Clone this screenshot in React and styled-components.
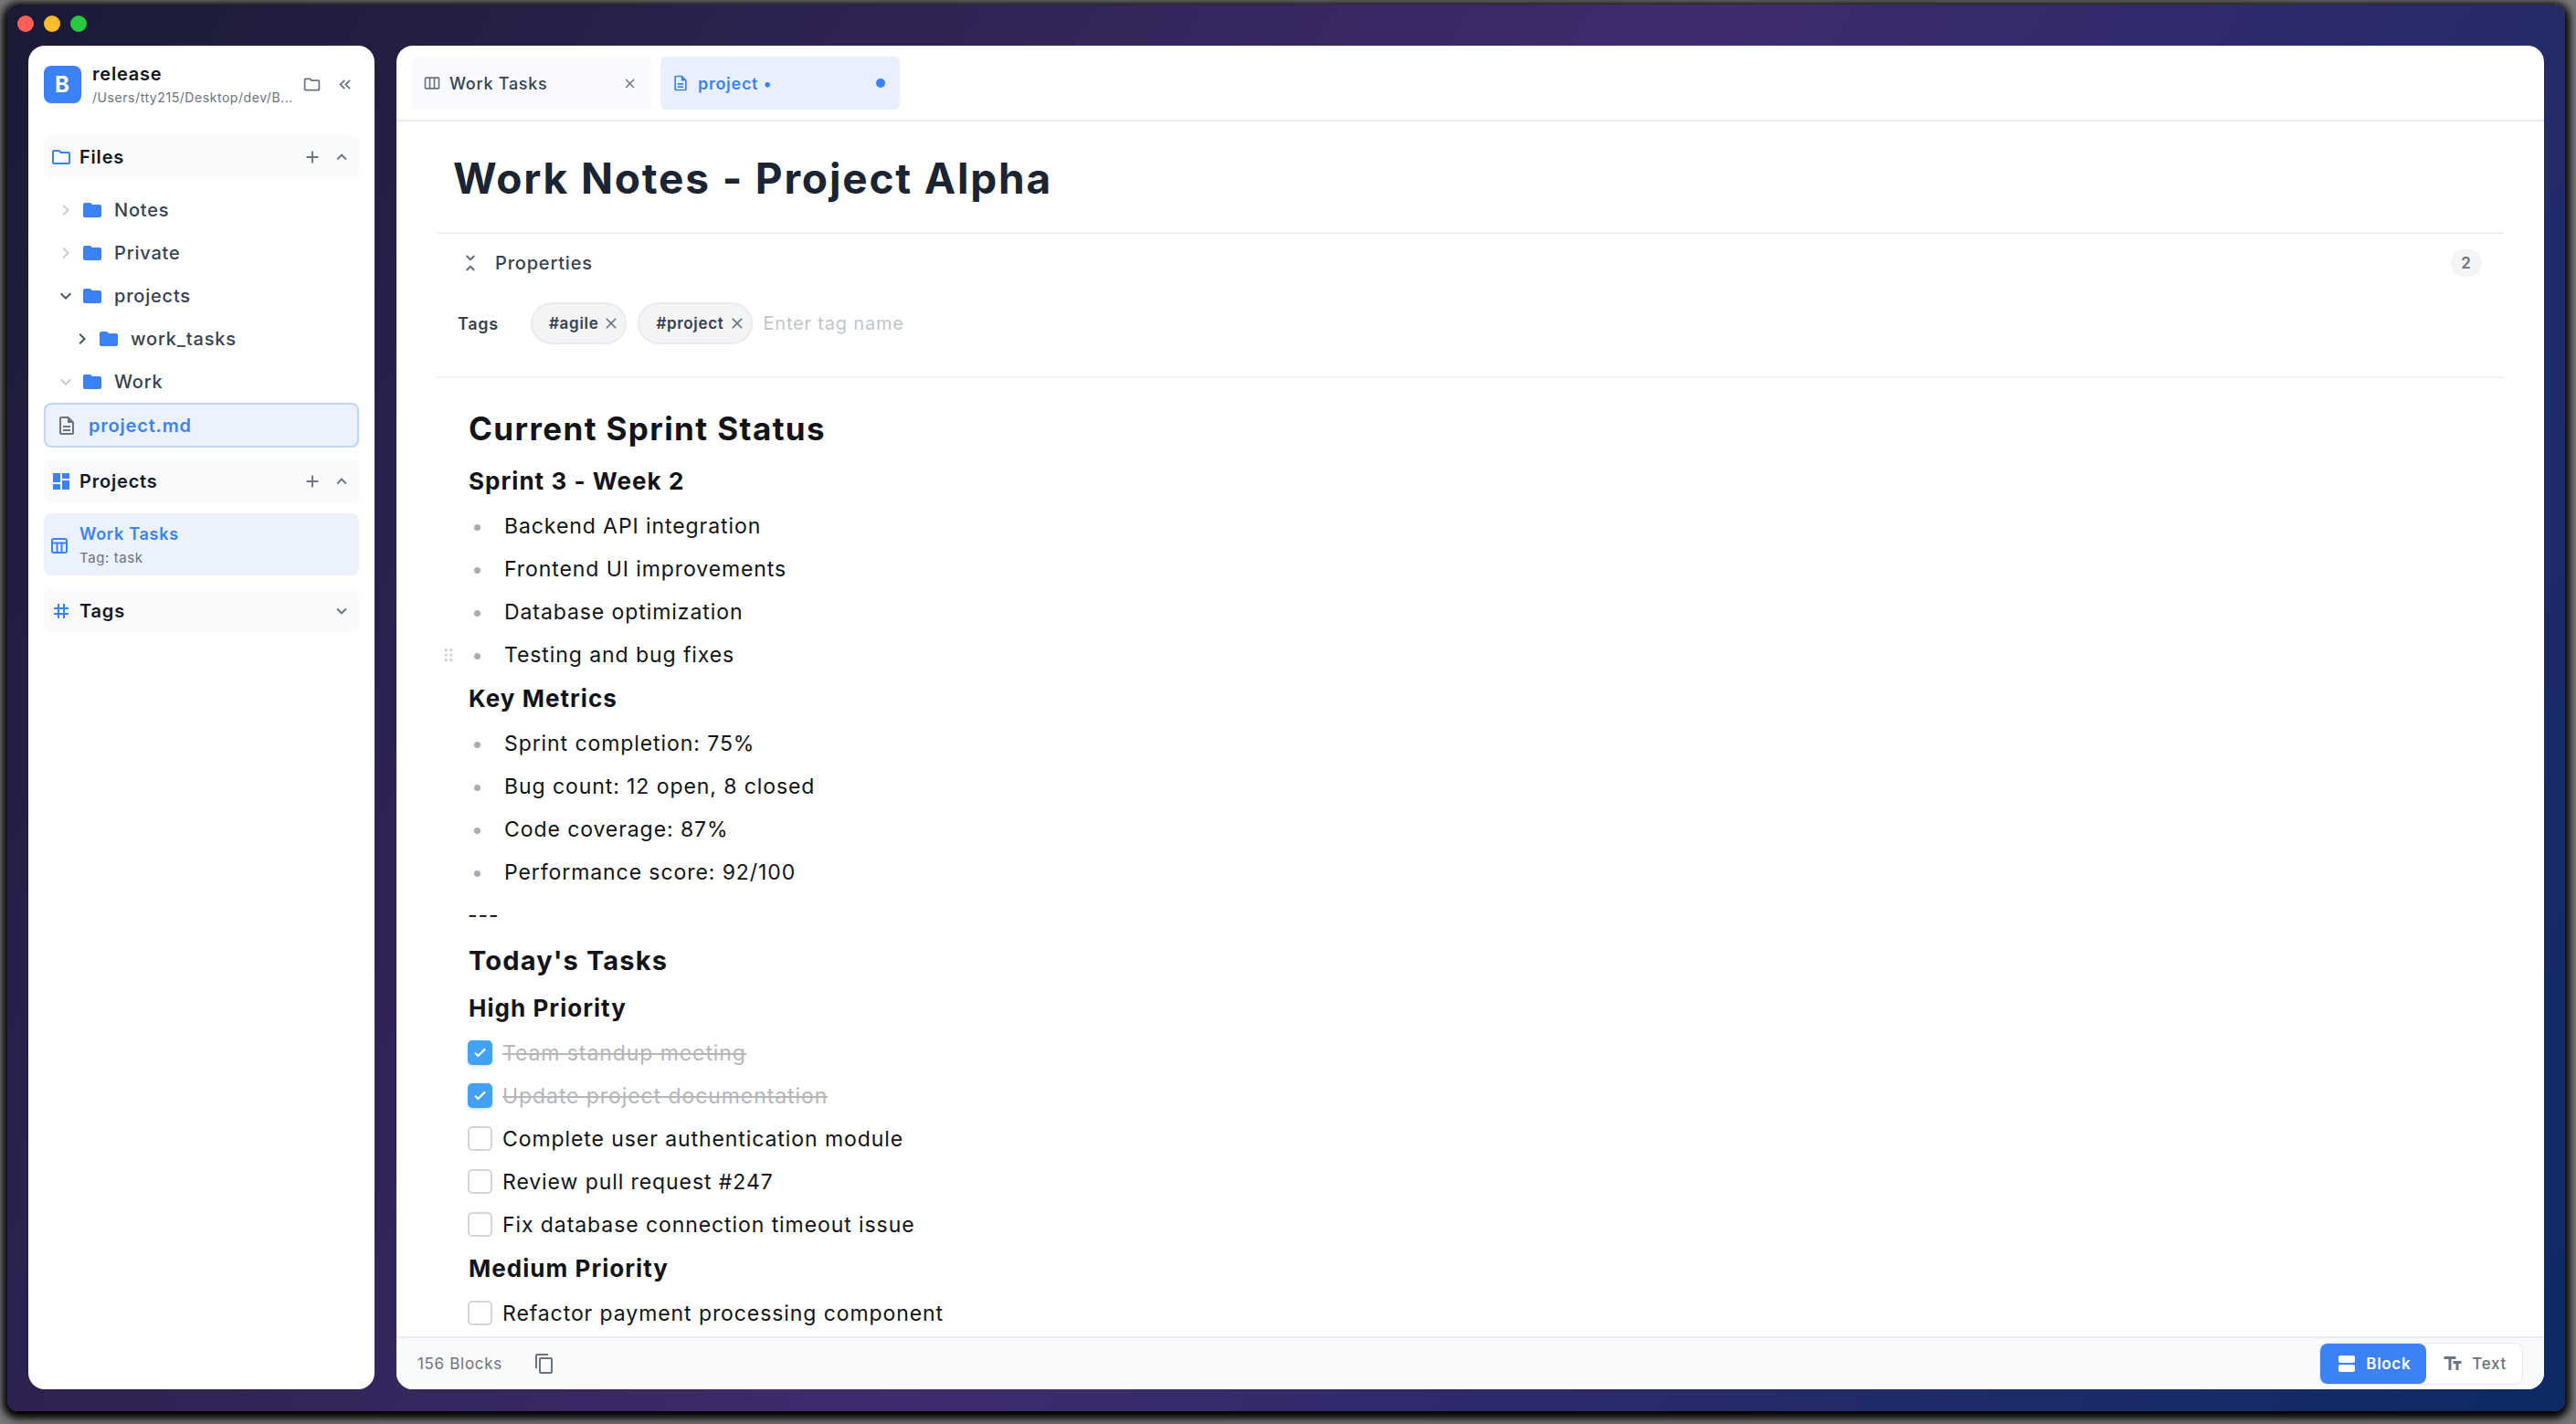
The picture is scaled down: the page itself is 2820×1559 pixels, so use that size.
import React, { useState } from "react";
import styled, { createGlobalStyle, css } from "styled-components";
import {
  MdOutlineFolder,
  MdFolder,
  MdKeyboardDoubleArrowLeft,
  MdAdd,
  MdExpandLess,
  MdExpandMore,
  MdChevronRight,
  MdDashboard,
  MdTag,
  MdClose,
  MdUnfoldLess,
  MdContentCopy,
  MdViewAgenda,
  MdTextFields,
  MdOutlineDescription,
  MdOutlineViewWeek,
  MdDragIndicator,
} from "react-icons/md";

const blue = "#3b82f6";
const gray = "#6b7280";

const GlobalStyle = createGlobalStyle`
  * { box-sizing: border-box; letter-spacing: 0.04em; }
  html, body, #root { height: 100%; }
  body {
    margin: 0;
    background: #777;
    font-family: Inter, "Liberation Sans", sans-serif;
    color: #111317;
  }
  button, input { font: inherit; }
  button { border: 0; padding: 0; background: none; cursor: pointer; }
  svg { display: block; flex: none; }
  h1, h2, h3, h4, p, ul { margin: 0; padding: 0; list-style: none; }
`;

const Desktop = styled.div`
  height: 100vh;
  padding: 5px 12px 14px 8px;
  overflow: hidden;
`;

const Window = styled.div`
  display: flex;
  flex-direction: column;
  height: 100%;
  border-radius: 12px;
  background: linear-gradient(120deg, #1a1a35 0%, #402b6d 50%, #0c2a66 100%);
  box-shadow: 0 3px 8px 5px #000;
`;

const TitleBar = styled.header`
  display: flex;
  align-items: center;
  gap: 11px;
  height: 45px;
  padding: 0 11px 3px;
`;

const Light = styled.button`
  width: 18px;
  height: 18px;
  border-radius: 50%;
  background: ${(p) => p.$color};
`;

const Panes = styled.div`
  display: flex;
  flex: 1;
  gap: 24px;
  min-height: 0;
  padding: 0 23px 24px;
`;

const Sidebar = styled.aside`
  width: 379px;
  flex: none;
  padding: 20px 17px 0;
  border-radius: 18px;
  background: #fff;
`;

const Brand = styled.div`
  display: flex;
  align-items: center;
  height: 44px;
  margin-bottom: 34px;
`;

const Logo = styled.span`
  display: grid;
  place-items: center;
  width: 41px;
  height: 41px;
  margin-right: 12px;
  border-radius: 8px;
  background: ${blue};
  color: #fff;
  font-size: 24px;
  font-weight: 700;
`;

const BrandText = styled.div`
  flex: 1;
  min-width: 0;
  padding-top: 3px;
`;

const BrandName = styled.div`
  font-size: 20px;
  line-height: 27px;
  font-weight: 600;
`;

const BrandPath = styled.div`
  color: ${gray};
  font-size: 14px;
  line-height: 24px;
  white-space: nowrap;
`;

const IconButton = styled.button`
  display: grid;
  place-items: center;
  width: ${(p) => p.$size || 24}px;
  height: ${(p) => p.$size || 24}px;
  color: ${gray};
`;

const BrandActions = styled.div`
  display: flex;
  gap: 12px;
  padding-right: 4px;
`;

const SectionHead = styled.div`
  display: flex;
  align-items: center;
  gap: 8px;
  height: 47px;
  padding: 0 7px;
  border-radius: 8px;
  background: #f9fafc;
  color: ${blue};
`;

const SectionTitle = styled.h2`
  flex: 1;
  color: #111827;
  font-size: 20px;
  font-weight: 600;
`;

const Tree = styled.ul`
  padding: 11px 0 13px;
`;

const TreeRow = styled.button`
  display: flex;
  align-items: center;
  width: 100%;
  height: 47px;
  padding-left: ${(p) => 12 + p.$depth * 18}px;
  color: #374151;
  font-size: 20px;
  font-weight: 500;
`;

const Twist = styled.span`
  width: 24px;
  margin-right: 5px;
  color: ${(p) => (p.$faint ? "#c9cdd3" : "#4b5563")};
`;

const FolderMark = styled.span`
  margin-right: 12px;
  color: ${blue};
`;

const FileRow = styled.button`
  display: flex;
  align-items: center;
  gap: 12px;
  width: 100%;
  height: 49px;
  padding: 0 11px;
  border: 2px solid #bfd5fb;
  border-radius: 8px;
  background: #ebf2fd;
  color: ${blue};
  font-size: 20px;
  font-weight: 600;

  svg { color: ${gray}; }
`;

const ProjectCard = styled.button`
  display: flex;
  align-items: center;
  gap: 11px;
  width: 100%;
  height: 68px;
  margin: 12px 0 15px;
  padding: 2px 6px 0;
  border-radius: 8px;
  background: #ebf1fd;
  color: ${blue};
  font-size: 18px;
  line-height: 28px;
  font-weight: 600;
  text-align: left;

  small {
    display: block;
    color: ${gray};
    font-size: 15px;
    line-height: 24px;
    font-weight: 400;
  }
`;

const Main = styled.main`
  display: flex;
  flex: 1;
  flex-direction: column;
  min-width: 0;
  border-radius: 18px;
  background: #fff;
  overflow: hidden;
`;

const TabBar = styled.nav`
  display: flex;
  flex: none;
  gap: 10px;
  padding: 12px 17px 11px;
  border-bottom: 2px solid #e8eaed;
`;

const Tab = styled.div`
  display: flex;
  align-items: center;
  justify-content: space-between;
  width: 262px;
  height: 58px;
  padding: 0 12px;
  border-radius: 6px;
  background: ${(p) => (p.$active ? "#e9f0fd" : "#f8fafe")};
`;

const TabLabel = styled.button`
  display: flex;
  align-items: center;
  gap: 9px;
  color: ${(p) => (p.$active ? blue : "#374151")};
  font-size: 18px;
  font-weight: ${(p) => (p.$active ? 600 : 500)};

  svg { color: ${(p) => (p.$active ? blue : gray)}; }
`;

const Unsaved = styled.span`
  width: 10px;
  height: 10px;
  margin-right: 4px;
  border-radius: 50%;
  background: ${blue};
`;

const Document = styled.div`
  flex: 1;
  min-height: 0;
  padding: 0 44px;
  overflow: hidden;
`;

const DocTitle = styled.h1`
  padding: 33px 18px 30px;
  color: #1a2433;
  font-size: 46px;
  line-height: 58px;
  font-weight: 700;
`;

const Properties = styled.section`
  height: 160px;
  border: solid #f1f2f4;
  border-width: 2px 0;
`;

const PropsHead = styled.div`
  display: flex;
  align-items: center;
  gap: 14px;
  height: 64px;
  padding: 0 24px;
  color: #374151;
  font-size: 20px;
  font-weight: 500;

  svg { color: ${gray}; }
`;

const Count = styled.span`
  display: grid;
  place-items: center;
  width: 34px;
  height: 30px;
  margin-left: auto;
  border-radius: 15px;
  background: #f3f4f6;
  color: ${gray};
  font-size: 17px;
  font-weight: 600;
`;

const TagRow = styled.div`
  display: flex;
  align-items: center;
  gap: 12px;
  padding: 11px 23px;
`;

const TagLabel = styled.label`
  width: 68px;
  color: #374151;
  font-size: 18px;
  font-weight: 600;
`;

const Chip = styled.span`
  display: flex;
  align-items: center;
  gap: 4px;
  height: 46px;
  padding: 0 5px 0 18px;
  border: 2px solid #e9ebee;
  border-radius: 23px;
  background: #f3f4f6;
  color: #374151;
  font-size: 17px;
  font-weight: 600;
`;

const TagInput = styled.input`
  width: 300px;
  padding: 0;
  border: 0;
  outline: 0;
  background: none;
  font-size: 20px;

  &::placeholder { color: #c0c4cd; opacity: 1; }
`;

const Blocks = styled.div`
  padding: 22px 8px 0;
`;

const headingSizes = {
  1: css`font-size: 35px; line-height: 66px;`,
  2: css`font-size: 29px; line-height: 54px;`,
  3: css`font-size: 26px; line-height: 50px;`,
};

const Heading = styled.h2`
  padding-left: 27px;
  font-weight: 700;
  ${(p) => headingSizes[p.$level]}
`;

const Line = styled.div`
  display: flex;
  align-items: center;
  height: 47px;
  font-size: 23px;
  font-weight: 400;
`;

const Handle = styled.span`
  display: flex;
  justify-content: flex-end;
  width: 16px;
  margin-right: 10px;
  color: #d3d6da;
`;

const Bullet = styled.span`
  width: 7px;
  height: 7px;
  margin: 4px 26px 0 7px;
  border-radius: 50%;
  background: #a9acb2;
`;

const Check = styled.input`
  appearance: none;
  flex: none;
  width: 27px;
  height: 27px;
  margin: 0 11px 0 0;
  border: 2px solid #d3d5d9;
  border-radius: 5px;
  background: #fff;

  &:checked {
    border-color: #42a0f5;
    background: #42a0f5 url("data:image/svg+xml,%3Csvg xmlns='http://www.w3.org/2000/svg' viewBox='0 0 24 24' fill='none' stroke='white' stroke-width='3' stroke-linecap='round' stroke-linejoin='round'%3E%3Cpath d='M5 13l4 4L19 7'/%3E%3C/svg%3E") center / 17px no-repeat;
    box-shadow: 0 2px 5px #42a0f540;
  }
`;

const TaskLabel = styled.label`
  color: ${(p) => (p.$done ? "#b4b6ba" : "inherit")};
  text-decoration: ${(p) => (p.$done ? "line-through" : "none")};
`;

const StatusBar = styled.footer`
  display: flex;
  flex: none;
  align-items: center;
  height: 58px;
  padding: 0 23px;
  border-top: 2px solid #e8eaed;
  background: #f9fafc;
  color: ${gray};
  font-size: 17px;
`;

const CopyButton = styled(IconButton)`
  margin-left: 34px;
`;

const Modes = styled.div`
  display: flex;
  height: 46px;
  margin-left: auto;
  border: 1px solid #e5e7eb;
  border-radius: 9px;
  background: #fff;
`;

const Mode = styled.button`
  display: flex;
  align-items: center;
  gap: 9px;
  padding: 0 17px;
  border-radius: 8px;
  background: ${(p) => (p.$active ? blue : "transparent")};
  color: ${(p) => (p.$active ? "#fff" : gray)};
  font-size: 17px;
  font-weight: ${(p) => (p.$active ? 600 : 500)};
`;

const tree = [
  { name: "Notes", faint: true },
  { name: "Private", faint: true },
  { name: "projects", open: true },
  { name: "work_tasks", depth: 1 },
  { name: "Work", open: true, faint: true },
];

const blocks = [
  { type: "h", level: 1, text: "Current Sprint Status" },
  { type: "h", level: 3, text: "Sprint 3 - Week 2" },
  { type: "li", text: "Backend API integration" },
  { type: "li", text: "Frontend UI improvements" },
  { type: "li", text: "Database optimization" },
  { type: "li", text: "Testing and bug fixes", hovered: true },
  { type: "h", level: 3, text: "Key Metrics" },
  { type: "li", text: "Sprint completion: 75%" },
  { type: "li", text: "Bug count: 12 open, 8 closed" },
  { type: "li", text: "Code coverage: 87%" },
  { type: "li", text: "Performance score: 92/100" },
  { type: "p", text: "---" },
  { type: "h", level: 2, text: "Today's Tasks" },
  { type: "h", level: 3, text: "High Priority" },
  { type: "task", text: "Team standup meeting", done: true },
  { type: "task", text: "Update project documentation", done: true },
  { type: "task", text: "Complete user authentication module" },
  { type: "task", text: "Review pull request #247" },
  { type: "task", text: "Fix database connection timeout issue" },
  { type: "h", level: 3, text: "Medium Priority" },
  { type: "task", text: "Refactor payment processing component" },
];

function Task({ id, text, initial }) {
  const [done, setDone] = useState(!!initial);
  return (
    <Line>
      <Handle />
      <Check id={id} type="checkbox" checked={done} onChange={() => setDone(!done)} />
      <TaskLabel htmlFor={id} $done={done}>{text}</TaskLabel>
    </Line>
  );
}

function Block({ block, index }) {
  if (block.type === "h") {
    return <Heading as={`h${block.level + 1}`} $level={block.level}>{block.text}</Heading>;
  }
  if (block.type === "task") {
    return <Task id={`task-${index}`} text={block.text} initial={block.done} />;
  }
  return (
    <Line>
      <Handle>{block.hovered && <MdDragIndicator size={22} />}</Handle>
      {block.type === "li" && <Bullet />}
      {block.text}
    </Line>
  );
}

function Section({ icon, title, addable, open }) {
  return (
    <SectionHead>
      {icon}
      <SectionTitle>{title}</SectionTitle>
      {addable && <IconButton aria-label={`Add to ${title}`}><MdAdd size={22} /></IconButton>}
      <IconButton aria-label={`Toggle ${title}`}>
        {open ? <MdExpandLess size={22} /> : <MdExpandMore size={22} />}
      </IconButton>
    </SectionHead>
  );
}

export default function App() {
  const [mode, setMode] = useState("Block");
  return (
    <Desktop>
      <GlobalStyle />
      <Window>
        <TitleBar>
          <Light $color="#ff5f57" aria-label="Close window" />
          <Light $color="#febc2e" aria-label="Minimize window" />
          <Light $color="#28c840" aria-label="Zoom window" />
        </TitleBar>
        <Panes>
          <Sidebar>
            <Brand>
              <Logo>B</Logo>
              <BrandText>
                <BrandName>release</BrandName>
                <BrandPath>/Users/tty215/Desktop/dev/B...</BrandPath>
              </BrandText>
              <BrandActions>
                <IconButton aria-label="Open folder"><MdOutlineFolder size={21} /></IconButton>
                <IconButton aria-label="Collapse sidebar"><MdKeyboardDoubleArrowLeft size={21} /></IconButton>
              </BrandActions>
            </Brand>
            <Section icon={<MdOutlineFolder size={24} />} title="Files" addable open />
            <Tree>
              {tree.map((row) => (
                <li key={row.name}>
                  <TreeRow $depth={row.depth || 0}>
                    <Twist $faint={row.faint}>
                      {row.open ? <MdExpandMore size={24} /> : <MdChevronRight size={24} />}
                    </Twist>
                    <FolderMark><MdFolder size={24} /></FolderMark>
                    {row.name}
                  </TreeRow>
                </li>
              ))}
              <li>
                <FileRow><MdOutlineDescription size={24} />project.md</FileRow>
              </li>
            </Tree>
            <Section icon={<MdDashboard size={24} />} title="Projects" addable open />
            <ProjectCard>
              <svg width="22" height="22" viewBox="0 0 22 22" fill="none" stroke="currentColor" strokeWidth="2">
                <rect x="3" y="4" width="16" height="15" rx="2" />
                <path d="M3 8.500h16M8.500 9v10M13.500 9v10" />
              </svg>
              <span>Work Tasks<small>Tag: task</small></span>
            </ProjectCard>
            <Section icon={<MdTag size={24} />} title="Tags" />
          </Sidebar>
          <Main>
            <TabBar>
              <Tab>
                <TabLabel><MdOutlineViewWeek size={20} />Work Tasks</TabLabel>
                <IconButton aria-label="Close tab"><MdClose size={17} /></IconButton>
              </Tab>
              <Tab $active>
                <TabLabel $active><MdOutlineDescription size={20} />project •</TabLabel>
                <Unsaved />
              </Tab>
            </TabBar>
            <Document>
              <DocTitle>Work Notes - Project Alpha</DocTitle>
              <Properties>
                <PropsHead>
                  <MdUnfoldLess size={26} />
                  Properties
                  <Count>2</Count>
                </PropsHead>
                <TagRow>
                  <TagLabel htmlFor="tag-name">Tags</TagLabel>
                  {["#agile", "#project"].map((tag) => (
                    <Chip key={tag}>
                      {tag}
                      <IconButton $size={20} aria-label={`Remove ${tag}`}><MdClose size={20} /></IconButton>
                    </Chip>
                  ))}
                  <TagInput id="tag-name" placeholder="Enter tag name" />
                </TagRow>
              </Properties>
              <Blocks>
                {blocks.map((block, index) => (
                  <Block key={block.text} block={block} index={index} />
                ))}
              </Blocks>
            </Document>
            <StatusBar>
              156 Blocks
              <CopyButton aria-label="Copy document"><MdContentCopy size={24} /></CopyButton>
              <Modes>
                <Mode $active={mode === "Block"} onClick={() => setMode("Block")}>
                  <MdViewAgenda size={24} />Block
                </Mode>
                <Mode $active={mode === "Text"} onClick={() => setMode("Text")}>
                  <MdTextFields size={24} />Text
                </Mode>
              </Modes>
            </StatusBar>
          </Main>
        </Panes>
      </Window>
    </Desktop>
  );
}
